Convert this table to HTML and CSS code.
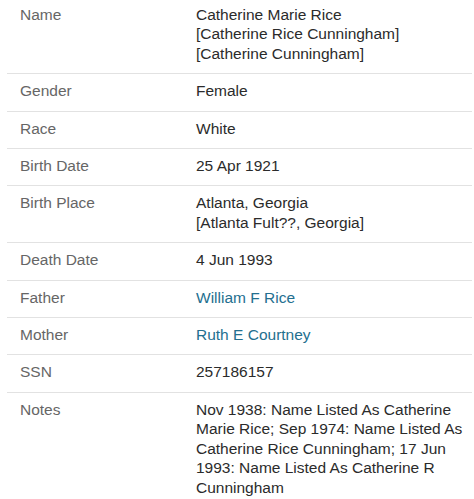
FILE: index.html
```html
<!DOCTYPE html>
<html>
<head>
<meta charset="utf-8">
<link rel="stylesheet" href="styles.css">
</head>
<body>
<dl class="facts">
  <div class="fact">
    <dt class="label">Name</dt>
    <dd class="value">Catherine Marie Rice<br>[Catherine Rice Cunningham]<br>[Catherine Cunningham]</dd>
  </div>
  <div class="fact">
    <dt class="label">Gender</dt>
    <dd class="value">Female</dd>
  </div>
  <div class="fact">
    <dt class="label">Race</dt>
    <dd class="value">White</dd>
  </div>
  <div class="fact">
    <dt class="label">Birth Date</dt>
    <dd class="value">25 Apr 1921</dd>
  </div>
  <div class="fact">
    <dt class="label">Birth Place</dt>
    <dd class="value">Atlanta, Georgia<br>[Atlanta Fult??, Georgia]</dd>
  </div>
  <div class="fact">
    <dt class="label">Death Date</dt>
    <dd class="value">4 Jun 1993</dd>
  </div>
  <div class="fact">
    <dt class="label">Father</dt>
    <dd class="value"><a class="link" href="#">William F Rice</a></dd>
  </div>
  <div class="fact">
    <dt class="label">Mother</dt>
    <dd class="value"><a class="link" href="#">Ruth E Courtney</a></dd>
  </div>
  <div class="fact">
    <dt class="label">SSN</dt>
    <dd class="value">257186157</dd>
  </div>
  <div class="fact">
    <dt class="label">Notes</dt>
    <dd class="value">Nov 1938: Name Listed As Catherine Marie Rice; Sep 1974: Name Listed As Catherine Rice Cunningham; 17 Jun 1993: Name Listed As Catherine R Cunningham</dd>
  </div>
</dl>
</body>
</html>
```
FILE: styles.css
```css
html, body {
  margin: 0;
  padding: 0;
  background: #ffffff;
}

body {
  font-family: "Liberation Sans", Arial, sans-serif;
  font-size: 15.5px;
  line-height: 19.4px;
  color: #2b2b2b;
}

.facts {
  margin: 0 2px 0 7px;
  padding: 0;
}

.fact {
  display: grid;
  grid-template-columns: 176px 1fr;
  padding: 7px 8px 10px 13px;
  border-top: 1px solid #e2e2e2;
}

.fact:first-child {
  border-top: none;
  padding-top: 5px;
}

.label {
  margin: 0;
  color: #666666;
}

.value {
  margin: 0;
  color: #2b2b2b;
}

.link {
  color: #246f8f;
  text-decoration: none;
}
```
